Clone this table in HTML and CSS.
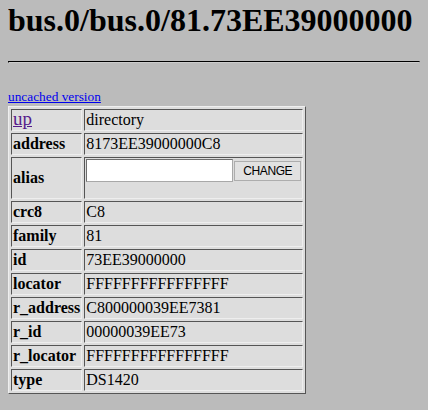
FILE: index.html
```html
<!DOCTYPE html>
<html lang="en">
<head>
    <meta charset="UTF-8">
    <title>1-Wire Web: bus.0/bus.0/81.73EE39000000</title>
    <link rel="stylesheet" href="styles.css">
</head>
<body>
    <h1>bus.0/bus.0/81.73EE39000000</h1>
    <hr>
    <p class="links"><a href="#" class="fresh">uncached version</a></p>

    <table class="props">
        <tr>
            <td class="key"><a href="#" class="visited">up</a></td>
            <td>directory</td>
        </tr>
        <tr>
            <td class="key"><b>address</b></td>
            <td>8173EE39000000C8</td>
        </tr>
        <tr>
            <td class="key"><b>alias</b></td>
            <td>
                <form class="alias-form"><input type="text" name="alias" class="alias-input"><button type="button" class="alias-btn">CHANGE</button></form>
            </td>
        </tr>
        <tr>
            <td class="key"><b>crc8</b></td>
            <td>C8</td>
        </tr>
        <tr>
            <td class="key"><b>family</b></td>
            <td>81</td>
        </tr>
        <tr>
            <td class="key"><b>id</b></td>
            <td>73EE39000000</td>
        </tr>
        <tr>
            <td class="key"><b>locator</b></td>
            <td>FFFFFFFFFFFFFFFF</td>
        </tr>
        <tr>
            <td class="key"><b>r_address</b></td>
            <td>C800000039EE7381</td>
        </tr>
        <tr>
            <td class="key"><b>r_id</b></td>
            <td>00000039EE73</td>
        </tr>
        <tr>
            <td class="key"><b>r_locator</b></td>
            <td>FFFFFFFFFFFFFFFF</td>
        </tr>
        <tr>
            <td class="key"><b>type</b></td>
            <td>DS1420</td>
        </tr>
    </table>
</body>
</html>
```

FILE: styles.css
```css
html, body {
    background-color: #bbbbbb;
}

body {
    margin: 0 8px 8px;
    font-family: "Liberation Serif", "Times New Roman", serif;
    font-size: 16px;
    color: #000;
}

h1 {
    font-size: 32px;
    font-weight: bold;
    margin: 2px 0 22px;
}

hr {
    margin: 0 0 8px;
    border: 1px inset #999;
    border-top-color: #555;
    border-left-color: #555;
    border-bottom-color: #ccc;
    height: 0;
}

/* small link line above the table */
.links {
    margin: 25px 0 0;
    font-size: 13.33px;
    line-height: 18px;
}

a.fresh {
    color: #0000ee;
}

a.visited {
    color: #551a8b;
    font-size: 19px;
    line-height: 10px;
}

.props {
    background-color: #dddddd;
    border: 1px solid;
    border-color: #eeeeee #555555 #555555 #eeeeee;
    border-spacing: 2px;
}

.props td {
    border: 1px solid;
    border-color: #555555 #eeeeee #eeeeee #555555;
    padding: 1px;
    height: 18px;
    line-height: 18px;
    vertical-align: middle;
}

.alias-form {
    margin: 0 0 15px;
    display: flex;
    align-items: center;
    gap: 1px;
}

.alias-input {
    width: 147px;
    height: 23px;
    box-sizing: border-box;
    margin: 0;
    padding: 1px 2px;
    border: 1px solid;
    border-color: #6e6e6e #a8a8a8 #a8a8a8 #6e6e6e;
    background: #fff;
}

.alias-btn {
    width: 67px;
    height: 20px;
    box-sizing: border-box;
    margin: 0;
    padding: 0;
    border: 1px solid #adadad;
    background: #e1e1e1;
    font-family: "Liberation Sans", Arial, sans-serif;
    font-size: 12px;
    letter-spacing: -0.4px;
    color: #000;
}
```
